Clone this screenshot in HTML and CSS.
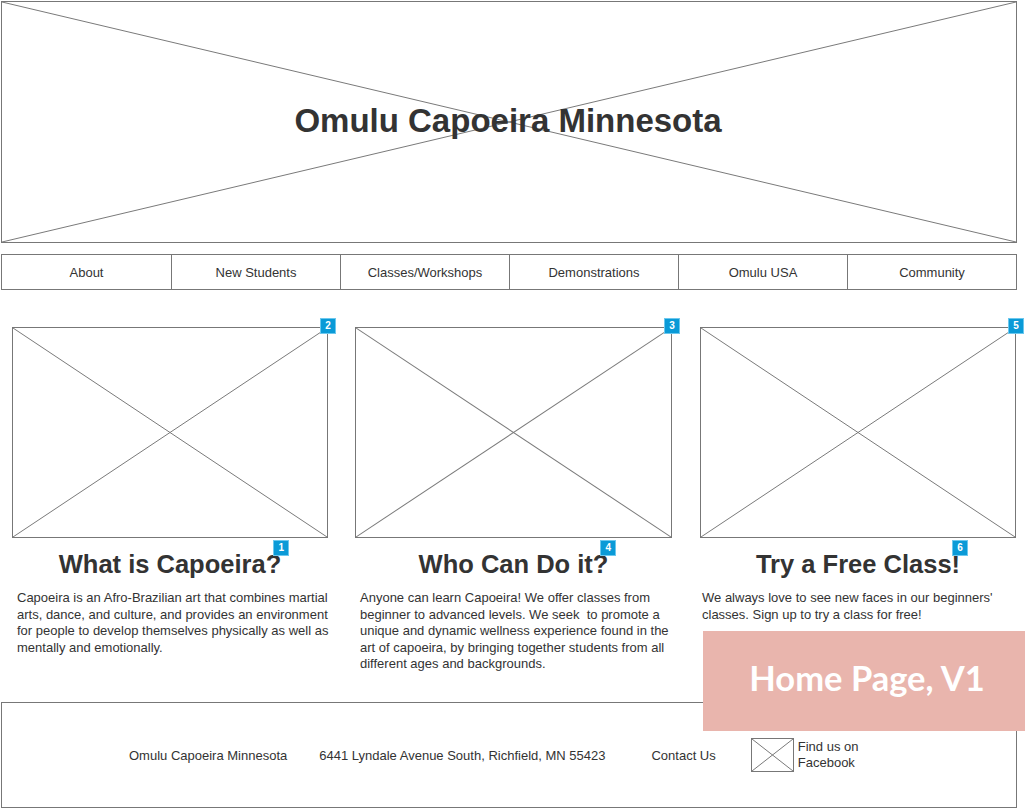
FILE: index.html
```html
<!DOCTYPE html>
<html lang="en">

<head>
    <meta charset="UTF-8">
    <meta name="viewport" content="width=device-width, initial-scale=1.0">
    <title>Omulu Capoeira Minnesota - Home Page, V1</title>
    <link rel="stylesheet" href="styles.css">
</head>

<body>
    <div class="page">
        <!-- Cabeçalho com imagem de fundo -->
        <header class="hero placeholder">
            <svg class="cross" viewBox="0 0 100 100" preserveAspectRatio="none">
                <line x1="0" y1="0" x2="100" y2="100" />
                <line x1="0" y1="100" x2="100" y2="0" />
            </svg>
            <h1>Omulu Capoeira Minnesota</h1>
        </header>

        <nav class="menu">
            <a href="#">About</a>
            <a href="#">New Students</a>
            <a href="#">Classes/Workshops</a>
            <a href="#">Demonstrations</a>
            <a href="#">Omulu USA</a>
            <a href="#">Community</a>
        </nav>

        <main class="cards">
            <section class="card">
                <div class="photo placeholder">
                    <svg class="cross" viewBox="0 0 100 100" preserveAspectRatio="none">
                        <line x1="0" y1="0" x2="100" y2="100" />
                        <line x1="0" y1="100" x2="100" y2="0" />
                    </svg>
                    <span class="badge photo-badge">2</span>
                </div>
                <h2><span class="title">What is Capoeira?<span class="badge title-badge">1</span></span></h2>
                <p>Capoeira is an Afro-Brazilian art that combines martial arts, dance, and culture, and provides an environment for people to develop themselves physically as well as mentally and emotionally.</p>
            </section>

            <section class="card">
                <div class="photo placeholder">
                    <svg class="cross" viewBox="0 0 100 100" preserveAspectRatio="none">
                        <line x1="0" y1="0" x2="100" y2="100" />
                        <line x1="0" y1="100" x2="100" y2="0" />
                    </svg>
                    <span class="badge photo-badge">3</span>
                </div>
                <h2><span class="title">Who Can Do it?<span class="badge title-badge">4</span></span></h2>
                <p>Anyone can learn Capoeira! We offer classes from beginner to advanced levels. We seek &nbsp;to promote a unique and dynamic wellness experience found in the art of capoeira, by bringing together students from all different ages and backgrounds.</p>
            </section>

            <section class="card card-last">
                <div class="photo placeholder">
                    <svg class="cross" viewBox="0 0 100 100" preserveAspectRatio="none">
                        <line x1="0" y1="0" x2="100" y2="100" />
                        <line x1="0" y1="100" x2="100" y2="0" />
                    </svg>
                    <span class="badge photo-badge">5</span>
                </div>
                <h2><span class="title">Try a Free Class!<span class="badge title-badge">6</span></span></h2>
                <p>We always love to see new faces in our beginners' classes. Sign up to try a class for free!</p>
            </section>
        </main>

        <footer class="rodape">
            <span class="nome">Omulu Capoeira Minnesota</span>
            <span class="endereco">6441 Lyndale Avenue South, Richfield, MN 55423</span>
            <a class="contato" href="#">Contact Us</a>
            <a class="facebook" href="#">
                <span class="fb-icon placeholder">
                    <svg class="cross" viewBox="0 0 100 100" preserveAspectRatio="none">
                        <line x1="0" y1="0" x2="100" y2="100" />
                        <line x1="0" y1="100" x2="100" y2="0" />
                    </svg>
                </span>
                <span class="fb-text">Find us on<br>Facebook</span>
            </a>
        </footer>

        <!-- Etiqueta da versão do wireframe -->
        <div class="versao">Home Page, V1</div>
    </div>
</body>

</html>
```

FILE: styles.css
```css
body {
    font-family: "Liberation Sans", Arial, sans-serif;
    background-color: #fff;
    color: #333;
    margin: 0;
    padding: 0;
}

.page {
    position: relative;
    width: 1016px;
    padding: 1px 0 0 1px;
}

.placeholder {
    position: relative;
    border: 1px solid #777;
    box-sizing: border-box;
}

.cross {
    position: absolute;
    left: 0;
    top: 0;
    width: 100%;
    height: 100%;
}

.cross line {
    stroke: #7a7a7a;
    stroke-width: 1;
    vector-effect: non-scaling-stroke;
}

.hero {
    height: 242px;
    display: flex;
    align-items: center;
    justify-content: center;
}

.hero h1 {
    position: relative;
    margin: 0 2px 2px 0;
    font-size: 33px;
    font-weight: bold;
    color: #333;
}

.menu {
    display: grid;
    grid-template-columns: repeat(6, 1fr);
    margin-top: 11px;
    border: 1px solid #777;
    height: 36px;
    box-sizing: border-box;
}

.menu a {
    display: flex;
    align-items: center;
    justify-content: center;
    font-size: 13px;
    color: #333;
    text-decoration: none;
    border-left: 1px solid #777;
}

.menu a:first-child {
    border-left: none;
}

.cards {
    display: grid;
    grid-template-columns: 316px 317px 317px;
    column-gap: 27px;
    margin-top: 37px;
    padding-left: 11px;
}

.card-last {
    margin-left: 1px;
}

.photo {
    height: 211px;
}

.badge {
    position: absolute;
    width: 16px;
    height: 16px;
    background-color: #0a9ad7;
    border: 1px solid #6cc8ee;
    box-sizing: border-box;
    color: #fff;
    font-size: 10px;
    font-weight: bold;
    line-height: 14px;
    text-align: center;
}

.photo-badge {
    right: -9px;
    top: -10px;
}

.card h2 {
    margin: 12px 0 0;
    font-size: 25.5px;
    line-height: 28px;
    text-align: center;
    color: #333;
}

.title {
    position: relative;
}

.title-badge {
    right: -8px;
    top: -10px;
}

.card p {
    margin: 12px -14px 0 5px;
    font-size: 13px;
    line-height: 16.5px;
    color: #333;
}

.card-last p {
    margin-left: 2px;
}

.rodape {
    display: flex;
    align-items: center;
    height: 106px;
    margin-top: 29.5px;
    padding-left: 127px;
    border: 1px solid #777;
    box-sizing: border-box;
    font-size: 13px;
}

.rodape a {
    color: #333;
    text-decoration: none;
}

.endereco {
    margin-left: 32px;
}

.contato {
    margin-left: 46px;
}

.facebook {
    display: flex;
    align-items: center;
    margin-left: 35px;
}

.fb-icon {
    display: block;
    width: 43px;
    height: 34px;
}

.fb-text {
    margin-left: 4px;
    line-height: 16px;
}

.versao {
    position: absolute;
    left: 703px;
    top: 631px;
    width: 322px;
    height: 100px;
    padding: 0 0 8px 6px;
    box-sizing: border-box;
    background-color: #e9b5ad;
    color: #fff;
    font-family: Lato, "Open Sans", sans-serif;
    font-weight: bold;
    font-size: 34.5px;
    display: flex;
    align-items: center;
    justify-content: center;
}
```
